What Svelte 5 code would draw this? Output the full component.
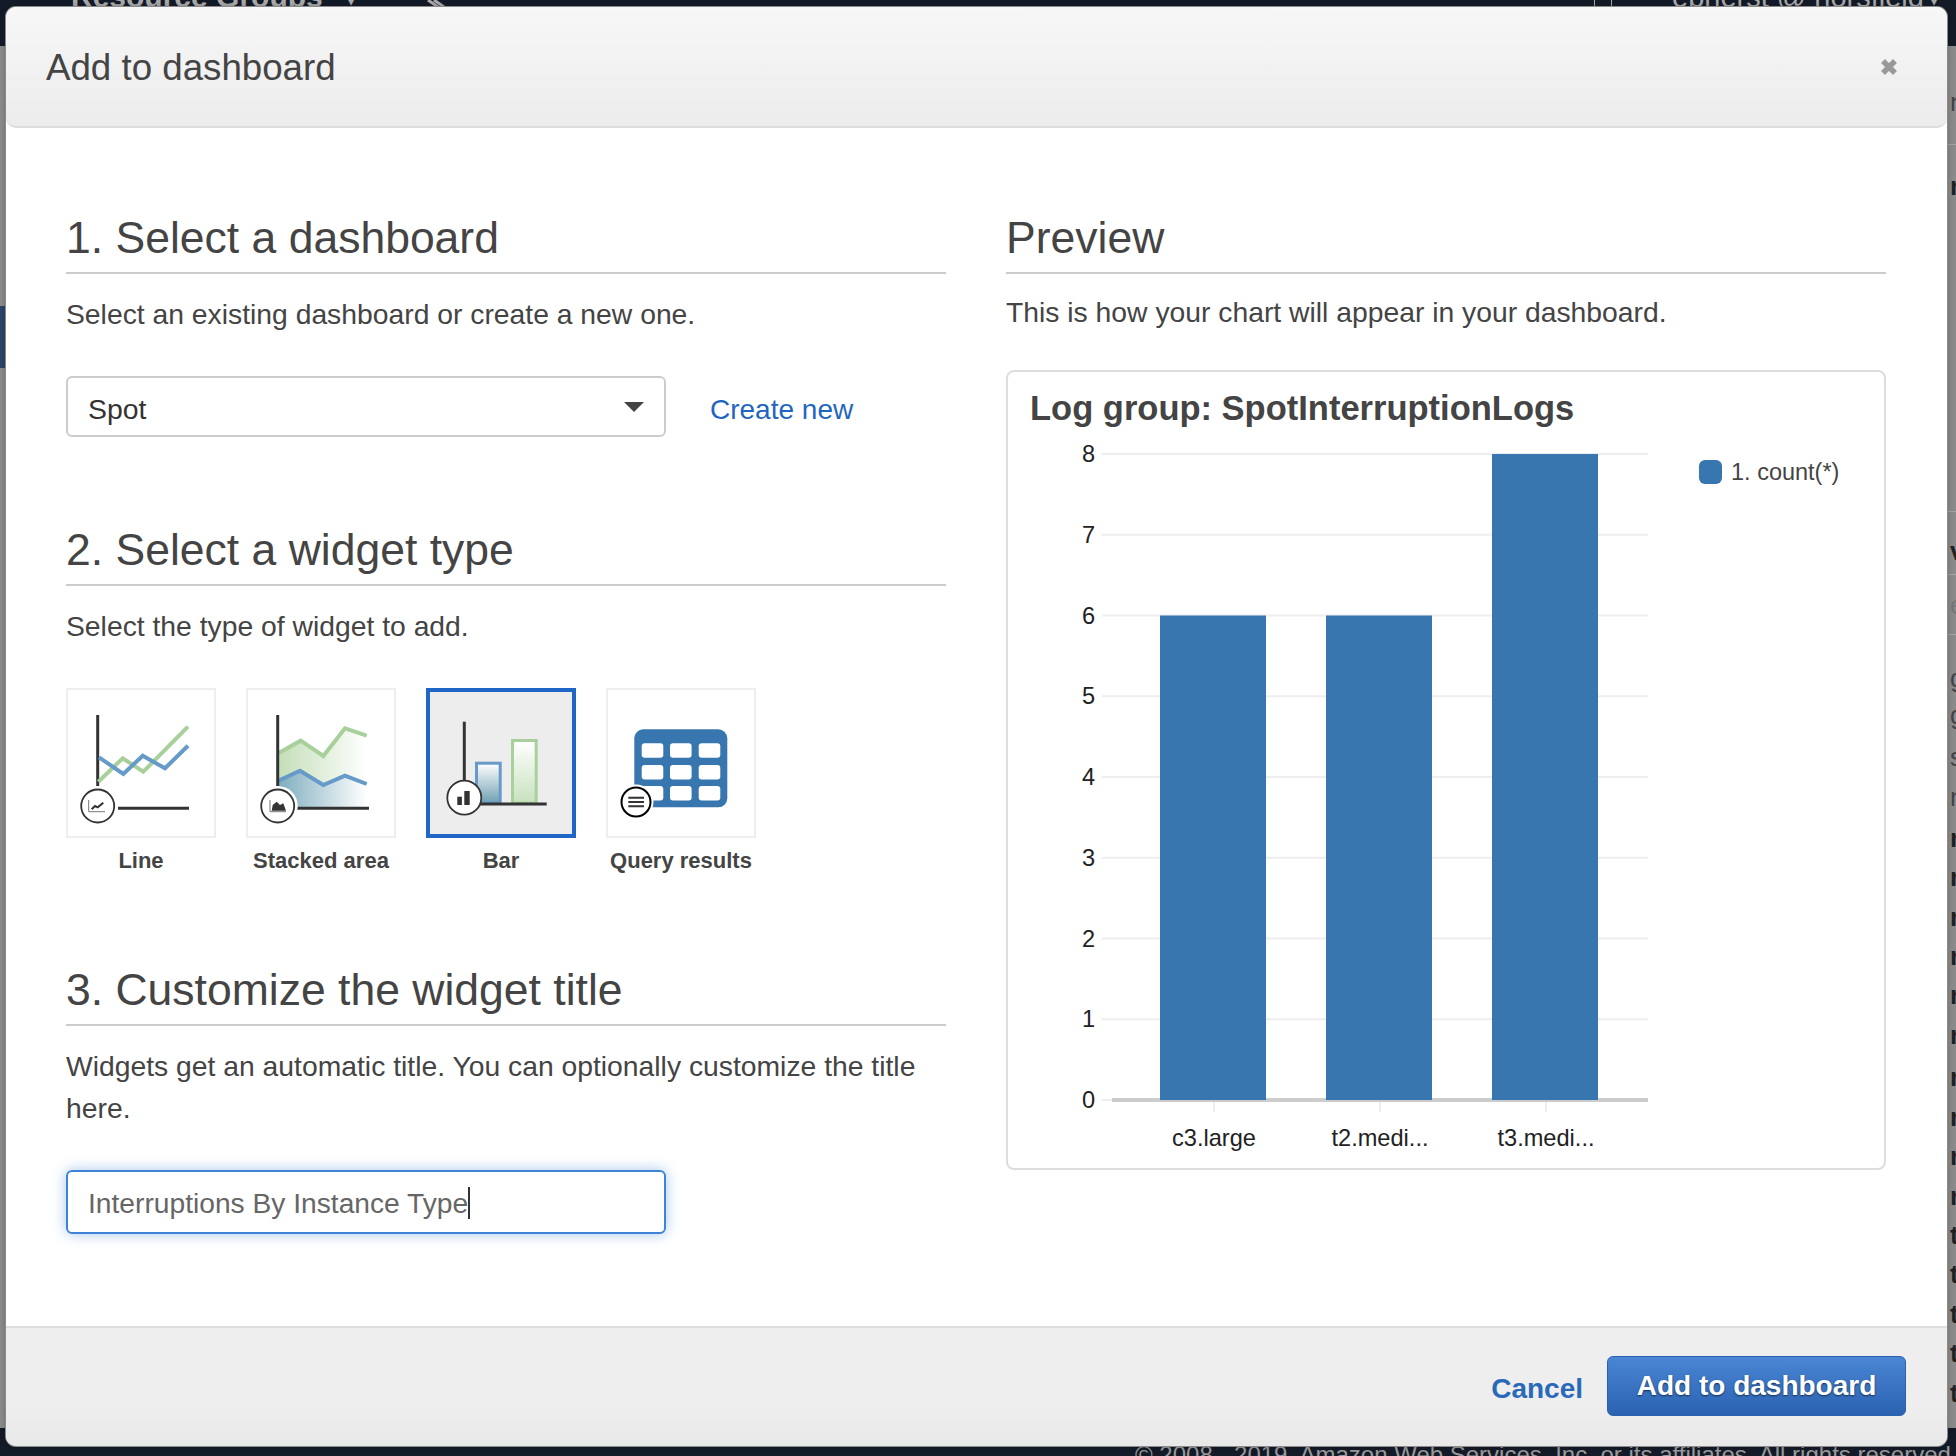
<script>
    const ticks = [8, 7, 6, 5, 4, 3, 2, 1, 0];
    const bars = [
        { label: 'c3.large', value: 6, x: 152 },
        { label: 't2.medi...', value: 6, x: 318 },
        { label: 't3.medi...', value: 8, x: 484 }
    ];
    const yFor = (v) => 18 + (8 - v) * 80.75;

    // what is left visible of the page behind the dialog, on its right edge
    const edgeText = [
        { ch: 'n', y: 102 }, { ch: 'n', y: 186, bold: true }, { ch: 'v', y: 551, bold: true },
        { ch: 'e', y: 605, dim: true }, { ch: 'g', y: 678 }, { ch: 'g', y: 715 }, { ch: 's', y: 757 },
        { ch: 'n', y: 797 }, { ch: 'r', y: 838, bold: true }, { ch: 'r', y: 877, bold: true },
        { ch: 'r', y: 917, bold: true }, { ch: 'r', y: 956, bold: true }, { ch: 'r', y: 995, bold: true },
        { ch: 'r', y: 1035, bold: true }, { ch: 'r', y: 1077, bold: true }, { ch: 'r', y: 1117, bold: true },
        { ch: 'r', y: 1156, bold: true }, { ch: 'r', y: 1196, bold: true }, { ch: 't', y: 1235, bold: true },
        { ch: 't', y: 1274, bold: true }, { ch: 't', y: 1314, bold: true }, { ch: 't', y: 1353, bold: true },
        { ch: 't', y: 1393, bold: true }
    ];
    const edgeLines = [144, 511, 574, 634];
</script>

<div class="page">
    <div class="backdrop">
        <div class="topbar">
            <span class="nav-left">Resource Groups</span>
            <span class="nav-chev">▾</span>
            <svg class="nav-pin" width="30" height="8" viewBox="0 0 30 8">
                <path d="M4 0 L14 7 M10 0 L20 7" stroke="#aaa" stroke-width="3" fill="none" />
            </svg>
            <i class="nav-box"></i>
            <span class="nav-right">ebherst @ horsfield</span>
            <span class="nav-chev end">▾</span>
        </div>
        <i class="side-active"></i>
        {#each edgeLines as y}
            <i class="edge-line" style="top: {y}px"></i>
        {/each}
        {#each edgeText as t}
            <span class="edge-ch" class:bold={t.bold} class:dim={t.dim} style="top: {t.y - 18}px">{t.ch}</span>
        {/each}
        <div class="footbar">© 2008 - 2019, Amazon Web Services, Inc. or its affiliates. All rights reserved.</div>
    </div>

    <div class="modal">
        <header class="modal-head">
            <h1>Add to dashboard</h1>
            <svg class="close" width="18" height="18" viewBox="0 0 18 18">
                <path d="M3 3 L15 15 M15 3 L3 15" stroke="#999" stroke-width="5.5" fill="none" />
            </svg>
        </header>

        <div class="modal-body">
            <div class="col">
                <h2>1. Select a dashboard</h2>
                <p>Select an existing dashboard or create a new one.</p>
                <div class="select-row">
                    <div class="select">
                        <span class="value">Spot</span>
                        <i class="caret"></i>
                    </div>
                    <a href="#create" class="link">Create new</a>
                </div>

                <h2 class="next">2. Select a widget type</h2>
                <p>Select the type of widget to add.</p>
                <div class="tiles">
                    <div class="tile-item">
                        <div class="tile">
                            <svg width="146" height="146" viewBox="2 2 146 146">
                                <path d="M31.7 27 V98" stroke="#333" stroke-width="3" fill="none" />
                                <path d="M52 120.3 H123" stroke="#333" stroke-width="3" fill="none" />
                                <path d="M32.3 93.7 L56.7 70.3 L77.3 83.7 L122 38.7" stroke="#a8d09a" stroke-width="4" fill="none" />
                                <path d="M33 69.3 L57.3 86 L76.7 67.7 L99 80.3 L122 57.7" stroke="#659ac9" stroke-width="4" fill="none" />
                                <circle cx="31.7" cy="118" r="16.5" fill="#fff" stroke="#333" stroke-width="1.8" />
                                <path d="M22.7 112 V123.7 H39" stroke="#777" stroke-width="1" fill="none" />
                                <path d="M25.7 121.3 L29 118 L31.7 119.3 L37.3 114.7" stroke="#333" stroke-width="2" fill="none" />
                            </svg>
                        </div>
                        <span>Line</span>
                    </div>
                    <div class="tile-item">
                        <div class="tile">
                            <svg width="146" height="146" viewBox="2 2 146 146">
                                <defs>
                                    <linearGradient id="areaGreen" x1="0" x2="1" y1="0" y2="0">
                                        <stop offset="0" stop-color="#c4deb8" />
                                        <stop offset="1" stop-color="#c4deb8" stop-opacity="0" />
                                    </linearGradient>
                                    <linearGradient id="areaBlue" x1="0" x2="1" y1="0" y2="0">
                                        <stop offset="0" stop-color="#7fadbe" />
                                        <stop offset="1" stop-color="#7fadbe" stop-opacity="0" />
                                    </linearGradient>
                                </defs>
                                <path d="M32.3 65.3 L54.7 52.7 L77.3 68 L99 40.3 L120.7 47.7 V96 L99 87.7 L77.3 97 L54 82.7 L32.3 92.7 Z" fill="url(#areaGreen)" />
                                <path d="M32.3 92.7 L54 82.7 L77.3 97 L99 87.7 L120.7 96 V120 H32.3 Z" fill="url(#areaBlue)" />
                                <path d="M32.3 65.3 L54.7 52.7 L77.3 68 L99 40.3 L120.7 47.7" stroke="#a8d09a" stroke-width="4" fill="none" />
                                <path d="M32.3 92.7 L54 82.7 L77.3 97 L99 87.7 L120.7 96" stroke="#659ac9" stroke-width="4" fill="none" />
                                <path d="M31.7 27 V98" stroke="#333" stroke-width="3" fill="none" />
                                <path d="M48 120.3 H123" stroke="#333" stroke-width="3" fill="none" />
                                <circle cx="31.7" cy="118" r="20" fill="#fff" />
                                <circle cx="31.7" cy="118" r="16.5" fill="#fff" stroke="#333" stroke-width="1.8" />
                                <path d="M24 112 V123.7 H40" stroke="#777" stroke-width="1" fill="none" />
                                <path d="M25.7 122.7 L26.7 117 L30.7 113.7 L34 117 L37.3 115.3 L40 122.7 Z" fill="#333" />
                            </svg>
                        </div>
                        <span>Stacked area</span>
                    </div>
                    <div class="tile-item">
                        <div class="tile selected">
                            <svg width="142" height="142" viewBox="4 4 142 142">
                                <defs>
                                    <linearGradient id="barBlue" x1="0" x2="0" y1="0" y2="1">
                                        <stop offset="0" stop-color="#fff" />
                                        <stop offset="1" stop-color="#6f9fb3" />
                                    </linearGradient>
                                    <linearGradient id="barGreen" x1="0" x2="0" y1="0" y2="1">
                                        <stop offset="0" stop-color="#fff" />
                                        <stop offset="1" stop-color="#c6e2bd" />
                                    </linearGradient>
                                </defs>
                                <path d="M38.3 33.7 V110" stroke="#333" stroke-width="3" fill="none" />
                                <rect x="50.5" y="75.2" width="23.7" height="40" fill="url(#barBlue)" stroke="#659ac9" stroke-width="3" />
                                <rect x="86.5" y="52.5" width="23.7" height="62.7" fill="url(#barGreen)" stroke="#a8d09a" stroke-width="3" />
                                <path d="M38 116 H120.7" stroke="#333" stroke-width="3" fill="none" />
                                <circle cx="38.3" cy="109.7" r="17" fill="#fff" stroke="#333" stroke-width="1.8" />
                                <rect x="31.3" y="108.7" width="4.6" height="8.3" fill="#333" />
                                <rect x="38.3" y="103" width="5.4" height="14" fill="#333" />
                            </svg>
                        </div>
                        <span>Bar</span>
                    </div>
                    <div class="tile-item">
                        <div class="tile">
                            <svg width="146" height="146" viewBox="2 2 146 146">
                                <rect x="28.3" y="41.3" width="93" height="78" rx="9" fill="#3776ae" />
                                {#each [55.3, 77, 98] as y}
                                    {#each [35.7, 64, 92.7] as x}
                                        <rect {x} {y} width="21.6" height="14.4" rx="3" fill="#fff" />
                                    {/each}
                                {/each}
                                <circle cx="30" cy="114" r="17.5" fill="#fff" />
                                <circle cx="30" cy="114" r="14.5" fill="#fff" stroke="#000" stroke-width="2" />
                                <path d="M22.3 109.7 H38 M22.3 114 H38 M22.3 118.3 H38" stroke="#333" stroke-width="2" fill="none" />
                            </svg>
                        </div>
                        <span>Query results</span>
                    </div>
                </div>

                <h2 class="next last">3. Customize the widget title</h2>
                <p>Widgets get an automatic title. You can optionally customize the title here.</p>
                <div class="text-input"><span class="value">Interruptions By Instance Type</span><i class="cursor"></i></div>
            </div>

            <div class="col">
                <h2>Preview</h2>
                <p class="preview-text">This is how your chart will appear in your dashboard.</p>
                <div class="card">
                    <div class="card-title">Log group: SpotInterruptionLogs</div>
                    <svg class="chart" width="876" height="732" viewBox="0 0 876 732">
                        {#each ticks as t}
                            <line x1="94" x2="640" y1={yFor(t)} y2={yFor(t)} stroke="#eee" stroke-width="2" />
                            <text x="87" y={yFor(t) + 8} text-anchor="end" class="tick">{t}</text>
                        {/each}
                        <rect x="104" y="662" width="536" height="4" fill="#ccc" />
                        {#each bars as b}
                            <rect x={b.x} y={yFor(b.value)} width="106" height={664 - yFor(b.value)} fill="#3776ae" />
                            <line x1={b.x + 54} x2={b.x + 54} y1="666" y2="676" stroke="#eee" stroke-width="2" />
                            <text x={b.x + 54} y="710" text-anchor="middle" class="tick">{b.label}</text>
                        {/each}
                        <rect x="691" y="24" width="23" height="24" rx="6" fill="#3776ae" />
                        <text x="723" y="44" class="legend">1. count(*)</text>
                    </svg>
                </div>
            </div>
        </div>

        <footer class="modal-foot">
            <a href="#cancel" class="cancel">Cancel</a>
            <button type="button" class="primary">Add to dashboard</button>
        </footer>
    </div>
</div>

<style>
    :global(body) {
        margin: 0;
        background: #8b8b8b;
    }

    .page {
        position: relative;
        width: 1956px;
        height: 1456px;
        overflow: hidden;
        font-family: "Liberation Sans", Arial, sans-serif;
        color: #444;
    }

    .backdrop {
        position: absolute;
        inset: 0;
    }
    .topbar {
        position: absolute;
        left: 0;
        right: 0;
        top: 0;
        height: 46px;
        background: #141b28;
        color: #aaa;
        font-size: 30px;
        line-height: 34px;
        font-weight: 700;
    }
    .nav-left,
    .nav-right,
    .nav-chev,
    .nav-pin,
    .nav-box {
        position: absolute;
    }
    .nav-left {
        left: 71px;
        top: -20px;
    }
    .nav-chev {
        left: 345px;
        top: -19px;
        font-size: 24px;
        font-weight: 400;
    }
    .nav-chev.end {
        left: 1928px;
    }
    .nav-pin {
        left: 424px;
        top: 0;
    }
    .nav-box {
        left: 1594px;
        top: -6px;
        width: 16px;
        height: 12px;
        border: 1px solid #aaa;
    }
    .nav-right {
        left: 1672px;
        top: -20px;
        font-size: 29px;
        font-weight: 400;
    }
    .side-active {
        position: absolute;
        left: 0;
        top: 306px;
        width: 6px;
        height: 62px;
        background: #2b4468;
    }
    .edge-line {
        position: absolute;
        left: 1948px;
        right: 0;
        height: 1px;
        background: #a6a6a6;
    }
    .edge-ch {
        position: absolute;
        left: 1950px;
        font-size: 26px;
        line-height: 36px;
        color: #444;
    }
    .edge-ch.bold {
        font-weight: 700;
        color: #222;
    }
    .edge-ch.dim {
        color: #777;
    }
    .footbar {
        position: absolute;
        left: 0;
        right: 0;
        bottom: 0;
        height: 28px;
        padding-left: 1135px;
        box-sizing: border-box;
        background: #141b28;
        color: #999;
        font-size: 24px;
        line-height: 54px;
        white-space: nowrap;
        overflow: hidden;
    }

    .modal {
        position: relative;
        display: flex;
        flex-direction: column;
        width: 1941px;
        height: 1439px;
        margin: 0 0 0 6px;
        top: 7px;
        background: #fff;
        border-radius: 10px;
        box-shadow: 0 0 0 1px #8a8a8a, 0 0 6px rgba(0, 0, 0, 0.3);
        overflow: hidden;
    }

    .modal-head {
        display: flex;
        align-items: center;
        justify-content: space-between;
        height: 121px;
        box-sizing: border-box;
        padding: 0 49px 0 40px;
        background: linear-gradient(#f7f7f7, #ececec);
        border-bottom: 2px solid #ddd;
        border-radius: 0 0 10px 10px;
        flex: none;
    }
    h1 {
        margin: 0;
        padding-top: 2px;
        font-size: 36.7px;
        font-weight: 400;
        color: #444;
    }

    .modal-body {
        flex: 1;
        display: grid;
        grid-template-columns: 880px 880px;
        column-gap: 60px;
        padding: 83px 60px 0;
    }

    h2 {
        margin: 0;
        height: 63px;
        box-sizing: border-box;
        border-bottom: 2px solid #ccc;
        font-size: 44.5px;
        font-weight: 400;
        line-height: 54px;
        color: #444;
    }
    h2.next {
        margin-top: 86px;
    }
    h2.last {
        margin-top: 88px;
    }

    p {
        margin: 19px 0 0;
        font-size: 28.3px;
        line-height: 42px;
        color: #444;
    }
    .preview-text {
        margin-top: 17px;
    }

    .select-row {
        display: flex;
        align-items: center;
        gap: 44px;
        margin-top: 41px;
    }
    .select {
        display: flex;
        align-items: center;
        justify-content: space-between;
        width: 600px;
        height: 61px;
        box-sizing: border-box;
        padding: 0 20px;
        border: 2px solid #ccc;
        border-radius: 6px;
        font-size: 28.4px;
        color: #333;
    }
    .value {
        padding-top: 6px;
    }
    .caret {
        width: 0;
        height: 0;
        border-left: 10px solid transparent;
        border-right: 10px solid transparent;
        border-top: 10px solid #444;
    }
    .link {
        padding-top: 7px;
        font-size: 28px;
        color: #1f66c0;
        text-decoration: none;
    }

    .tiles {
        display: flex;
        gap: 30px;
        margin-top: 41px;
    }
    .tile-item {
        display: flex;
        flex-direction: column;
        align-items: center;
        width: 150px;
        white-space: nowrap;
    }
    .tile-item span {
        margin-top: 9px;
        font-size: 22px;
        font-weight: 700;
        line-height: 28px;
        color: #444;
    }
    .tile {
        width: 150px;
        height: 150px;
        box-sizing: border-box;
        border: 2px solid #eee;
    }
    .tile svg {
        display: block;
    }
    .tile.selected {
        border: 4px solid #1f66c6;
        background: #ededed;
    }

    .text-input {
        display: flex;
        align-items: center;
        width: 600px;
        height: 64px;
        box-sizing: border-box;
        margin-top: 41px;
        padding: 0 20px;
        border: 2px solid #3e83d8;
        border-radius: 6px;
        box-shadow: 0 0 14px rgba(62, 131, 216, 0.45);
        font-size: 28.2px;
        color: #666;
    }
    .text-input .value {
        padding-top: 3px;
    }
    .cursor {
        width: 2px;
        height: 32px;
        margin-top: 2px;
        background: #333;
    }

    .card {
        height: 800px;
        box-sizing: border-box;
        margin-top: 37px;
        border: 2px solid #ddd;
        border-radius: 8px;
        overflow: hidden;
    }
    .card-title {
        height: 64px;
        padding-left: 22px;
        font-size: 34.5px;
        font-weight: 700;
        line-height: 72px;
        color: #444;
    }
    .chart {
        display: block;
    }
    .tick {
        font-size: 23.6px;
        fill: #222;
    }
    .legend {
        font-size: 23.5px;
        fill: #444;
    }

    .modal-foot {
        flex: none;
        display: flex;
        align-items: center;
        justify-content: flex-end;
        gap: 24px;
        height: 120px;
        box-sizing: border-box;
        padding: 0 41px 2px 0;
        background: linear-gradient(#eee 70%, #e8e8e8);
        border-top: 2px solid #ddd;
    }
    .cancel {
        padding-top: 5px;
        font-size: 28px;
        font-weight: 700;
        color: #2a69b8;
        text-decoration: none;
    }
    .primary {
        width: 299px;
        height: 60px;
        border: 1px solid #2a62b0;
        border-radius: 6px;
        background: linear-gradient(#4a86d4, #2a62b0);
        color: #fff;
        font-family: inherit;
        font-size: 28px;
        font-weight: 700;
        text-shadow: 0 1px 2px rgba(0, 0, 0, 0.6);
    }
</style>
